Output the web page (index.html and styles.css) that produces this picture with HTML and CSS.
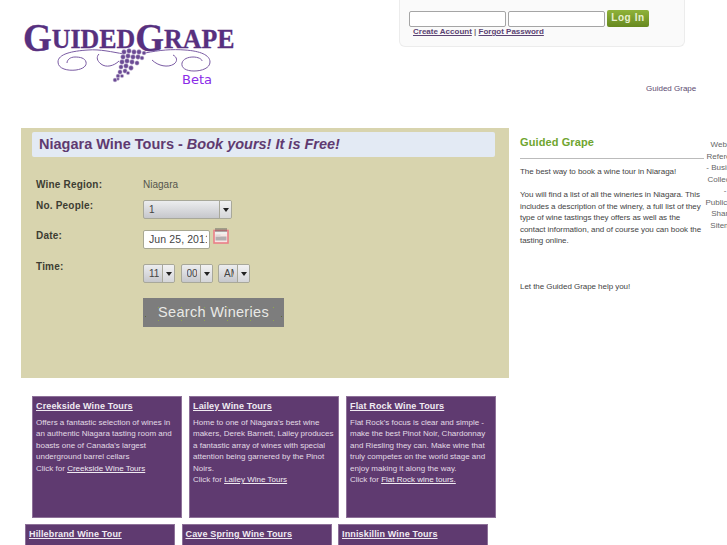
FILE: index.html
```html
<!DOCTYPE html>
<html lang="en">
<head>
  <meta charset="UTF-8">
  <title>Guided Grape</title>
  <link rel="stylesheet" href="styles.css">
</head>
<body>

  <!-- Header -->
  <div class="header">
    <svg class="logo" width="216" height="70" viewBox="22 20 216 70">
      <text class="logo-text" transform="translate(23 48) scale(.925 1)"><tspan class="logo-big" dy="3">G</tspan><tspan dy="-3">UIDED</tspan><tspan class="logo-big" dy="3">G</tspan><tspan dy="-3">RAPE</tspan></text>
      <g class="vine">
        <path d="M124 54C112 52 100 49 88 50C72 51 58 54 58 62C58 69 68 71 76 70C83 69 87 66 86 62C85 58 80 57 75 57C70 57 67 60 67 63"/>
        <path d="M119 61C114 66 106 68 101 64C97 61 96 57 99 54"/>
        <path d="M145 53C160 50 172 49 185 50C200 51 210 55 210 62C210 68 202 71 194 71C186 71 181 68 182 63C183 59 188 57 193 57C198 57 202 59 202 61"/>
        <path d="M152 60C158 66 168 68 174 64C178 61 177 57 173 55"/>
      </g>
      <g class="grapes">
        <circle cx="124" cy="52" r="2.4"/><circle cx="129" cy="51" r="2.4"/><circle cx="134" cy="52" r="2.4"/><circle cx="139" cy="52" r="2.4"/><circle cx="144" cy="53" r="2"/>
        <circle cx="123" cy="57" r="2.4"/><circle cx="128" cy="56" r="2.4"/><circle cx="133" cy="57" r="2.4"/><circle cx="138" cy="57" r="2.4"/><circle cx="142" cy="58" r="2"/>
        <circle cx="122" cy="62" r="2.4"/><circle cx="127" cy="61" r="2.4"/><circle cx="132" cy="62" r="2.4"/><circle cx="137" cy="63" r="2.2"/>
        <circle cx="121" cy="67" r="2.2"/><circle cx="126" cy="66" r="2.4"/><circle cx="131" cy="68" r="2.4"/>
        <circle cx="120" cy="72" r="2.2"/><circle cx="125" cy="71" r="2.2"/><circle cx="128" cy="73" r="1.8"/>
        <circle cx="118" cy="76" r="2"/><circle cx="122" cy="76" r="1.8"/>
        <circle cx="115" cy="80" r="2"/><circle cx="118" cy="79" r="1.4"/>
      </g>
      <text class="logo-beta" x="182" y="84">Beta</text>
    </svg>

    <div class="login-box">
      <div class="login-row">
        <input class="login-input" type="text">
        <input class="login-input" type="password">
        <span class="login-btn">Log In</span>
      </div>
      <div class="login-links">
        <a href="#">Create Account</a> | <a href="#">Forgot Password</a>
      </div>
    </div>

    <div class="site-name">Guided Grape</div>
  </div>

  <!-- Main area -->
  <div class="content">
    <div class="left-col">
      <div class="search-panel">
        <h1 class="search-title">Niagara Wine Tours - <em>Book yours! It is Free!</em></h1>

        <div class="form-row row-region">
          <span class="form-label">Wine Region:</span>
          <span class="form-value">Niagara</span>
        </div>
        <div class="form-row row-people">
          <span class="form-label">No. People:</span>
          <span class="select select-wide"><span class="select-value">1</span><span class="select-arrow"></span></span>
        </div>
        <div class="form-row row-date">
          <span class="form-label">Date:</span>
          <span class="date-input">Jun 25, 201<span class="date-cut">1</span></span>
          <svg class="cal-icon" width="16" height="16" viewBox="0 0 16 16">
            <rect x="1" y="2.5" width="14" height="12.5" fill="#f6e6e4" stroke="#ea7f88" stroke-width="1.6"/>
            <rect x="2" y="3.5" width="12" height="2.5" fill="#eef0ee"/>
            <path d="M3 0V4M5 0V4M7 0V4M9 0V4M11 0V4M13 0V4" stroke="#5c5c5c" stroke-width=".9"/>
            <rect x="2.5" y="8.5" width="11" height="4" fill="#b4aeb0"/>
            <rect x="2.5" y="6.5" width="5" height="2" fill="#e2d8d8"/>
          </svg>
        </div>
        <div class="form-row row-time">
          <span class="form-label">Time:</span>
          <span class="select select-small"><span class="select-value">11</span><span class="select-arrow"></span></span>
          <span class="select select-small"><span class="select-value">00</span><span class="select-arrow"></span></span>
          <span class="select select-small"><span class="select-value">AM</span><span class="select-arrow"></span></span>
        </div>
        <div class="search-btn">Search Wineries</div>
      </div>

      <!-- Winery cards -->
      <div class="card-row">
        <div class="card">
          <a class="card-title" href="#">Creekside Wine Tours</a>
          <p>Offers a fantastic selection of wines in an authentic Niagara tasting room and boasts one of Canada's largest underground barrel cellars<br>Click for <a href="#">Creekside Wine Tours </a></p>
        </div>
        <div class="card">
          <a class="card-title" href="#">Lailey Wine Tours</a>
          <p>Home to one of Niagara's best wine makers, Derek Barnett, Lailey produces a fantastic array of wines with special attention being garnered by the Pinot Noirs.<br>Click for <a href="#">Lailey Wine Tours</a></p>
        </div>
        <div class="card">
          <a class="card-title" href="#">Flat Rock Wine Tours</a>
          <p>Flat Rock's focus is clear and simple - make the best Pinot Noir, Chardonnay and Riesling they can. Make wine that truly competes on the world stage and enjoy making it along the way.<br>Click for <a href="#">Flat Rock wine tours.</a></p>
        </div>
      </div>
      <div class="card-row card-row-2">
        <div class="card">
          <a class="card-title" href="#">Hillebrand Wine Tour</a>
        </div>
        <div class="card">
          <a class="card-title" href="#">Cave Spring Wine Tours</a>
        </div>
        <div class="card">
          <a class="card-title" href="#">Inniskillin Wine Tours</a>
        </div>
      </div>
    </div>

    <div class="sidebar">
      <h2 class="sidebar-title">Guided Grape</h2>
      <p>The best way to book a wine tour in Niaraga!</p>
      <p>You will find a list of all the wineries in Niagara. This includes a description of the winery, a full list of they type of wine tastings they offers as well as the contact information, and of course you can book the tasting online.</p>
      <p class="sidebar-last">Let the Guided Grape help you!</p>
    </div>

    <div class="links-col">Website<br>Reference<br>- Business<br>Collection<br>-<br>Publication<br>Sharing<br>Sitemap</div>
  </div>

</body>
</html>
```

FILE: styles.css
```css
html, body {
  margin: 0;
  padding: 0;
  height: 100%;
  overflow: hidden;
  background: white;
  font-family: "Liberation Sans", Arial, sans-serif;
  font-size: 8px;
  color: #444;
}

/* Header */
.header {
  display: flex;
  height: 128px;
}

.logo {
  flex: none;
  margin: 20px 0 0 22px;
}

.logo-text {
  font-family: "Liberation Serif", serif;
  font-weight: bold;
  font-size: 28px;
  fill: #57307f;
  stroke: #57307f;
  stroke-width: .3;
}

.logo-big {
  font-size: 40px;
}

.vine path {
  fill: none;
  stroke: #7a5ba3;
  stroke-width: 1;
}

.grapes circle {
  fill: #6a4a94;
  stroke: #d8cfe2;
  stroke-width: .5;
}

.logo-beta {
  font-family: "DejaVu Sans", sans-serif;
  font-size: 13px;
  fill: #8a2be8;
}

.login-box {
  flex: none;
  box-sizing: border-box;
  width: 286px;
  height: 47px;
  margin-left: 161px;
  padding: 10px 0 0 9px;
  background: #fafafa;
  border: 1px solid #ececec;
  border-top: 0;
  border-radius: 0 0 6px 6px;
}

.login-row {
  display: flex;
  gap: 2px;
  align-items: flex-start;
}

.login-input {
  box-sizing: border-box;
  width: 97px;
  height: 16px;
  margin: 1px 0 0;
  padding: 0;
  background: white;
  border: 1px solid #a5a5a5;
  border-radius: 2px;
}

.login-btn {
  box-sizing: border-box;
  width: 42px;
  height: 17px;
  line-height: 16px;
  text-align: center;
  font-size: 10px;
  font-weight: bold;
  letter-spacing: .6px;
  color: #e8f0d0;
  background: linear-gradient(#8fb33a, #66881f);
  border-radius: 2px;
}

.login-links {
  margin: 0 0 0 4px;
  font-weight: bold;
  color: #777;
}

.login-links a {
  color: #5b4373;
}

.site-name {
  flex: none;
  margin: 83px 0 0 -39px;
  width: 52px;
  height: 12px;
  line-height: 12px;
  white-space: nowrap;
  color: #5d4a70;
}

/* Main area */
.content {
  display: flex;
  align-items: flex-start;
}

.left-col {
  flex: none;
  width: 499px;
  margin-left: 21px;
}

.search-panel {
  box-sizing: border-box;
  height: 250px;
  width: 488px;
  padding: 4px 0 0 11px;
  background: #d8d4ae;
}

.search-title {
  box-sizing: border-box;
  width: 463px;
  height: 25px;
  margin: 0 0 21px;
  padding-left: 7px;
  line-height: 24px;
  font-size: 14.5px;
  font-weight: bold;
  color: #5f3a70;
  background: #e3eaf4;
  border-radius: 2px;
}

.form-row {
  display: flex;
  align-items: flex-start;
}

.form-label {
  flex: none;
  width: 107px;
  margin-left: 4px;
  line-height: 14px;
  font-size: 10px;
  font-weight: bold;
  letter-spacing: .2px;
  color: #3d3d33;
}

.form-value {
  font-size: 10px;
  color: #55554d;
}

.row-region {
  height: 20px;
  line-height: 14px;
}

.row-people {
  height: 31px;
}

.row-people .form-label {
  margin-top: 1px;
}

.row-people .select {
  margin-top: 2px;
}

.row-date {
  height: 31px;
}

.row-time {
  height: 38px;
}

.row-time .select {
  margin-top: 4px;
}

.select {
  box-sizing: border-box;
  display: flex;
  height: 19px;
  line-height: 17px;
  font-size: 10px;
  color: #444;
  background: linear-gradient(#ecedef, #c6c7cc);
  border: 1px solid #a8a89a;
  border-radius: 2px;
  overflow: hidden;
}

.select-value {
  flex: 1;
  margin: 0 3px 0 5px;
  overflow: hidden;
  white-space: nowrap;
}

.select-arrow {
  position: relative;
  flex: none;
  width: 11px;
  border-left: 1px solid #a8a89a;
  background: linear-gradient(#f2f2f3, #d5d6d9);
}

.select-arrow::after {
  content: "";
  position: absolute;
  top: 7px;
  left: 3px;
  border: 3px solid transparent;
  border-top: 4px solid #222;
  border-bottom: 0;
}

.select-wide {
  width: 89px;
}

.select-small {
  width: 32px;
  margin-right: 5.5px;
}

.date-input {
  box-sizing: border-box;
  width: 67px;
  height: 19px;
  margin-top: 1px;
  padding-left: 5px;
  line-height: 17px;
  font-size: 10.5px;
  letter-spacing: .1px;
  white-space: nowrap;
  overflow: hidden;
  color: #444;
  background: white;
  border: 1px solid #a8a893;
  border-radius: 2px;
}

.date-cut {
  display: inline-block;
  width: 2px;
  overflow: hidden;
  vertical-align: bottom;
}

.cal-icon {
  margin: -1px 0 0 3px;
}

.search-btn {
  width: 141px;
  height: 29px;
  margin: 0 0 0 111px;
  line-height: 28px;
  text-align: center;
  font-size: 14.5px;
  letter-spacing: .3px;
  color: #e9e9e6;
  background-color: #7d7d7d;
  background-image:
    radial-gradient(circle, #8fa84a .6px, transparent 1px),
    radial-gradient(circle, #5e6a3c .5px, transparent 1px);
  background-size: 23px 13px, 17px 19px;
  background-position: 4px 3px, 11px 9px;
}

/* Cards */
.card-row {
  display: flex;
  gap: 7px;
  margin: 18px 0 0 11px;
}

.card-row-2 {
  gap: 6.5px;
  margin: 6px 0 0 4px;
}

.card {
  box-sizing: border-box;
  flex: none;
  width: 150px;
  height: 122px;
  padding: 3px 3px 0 3px;
  color: #e2dbe5;
  background: #5f3a70;
  border: 1px solid #8e7199;
}

.card-title {
  display: block;
  font-size: 9px;
  font-weight: bold;
  line-height: 12px;
  letter-spacing: .15px;
  color: #f4f0f5;
}

.card p {
  margin: 5px 0 0;
  line-height: 11.4px;
}

.card a {
  color: #f0ebf2;
}

/* Sidebar */
.sidebar {
  flex: none;
  box-sizing: border-box;
  width: 184px;
  line-height: 11.5px;
  letter-spacing: -.05px;
}

.sidebar-title {
  margin: 0;
  height: 30px;
  line-height: 29px;
  font-size: 11px;
  letter-spacing: .1px;
  color: #6fa52f;
  border-bottom: 1px solid #bbb;
}

.sidebar p {
  margin: 7px 0 11.5px;
}

.sidebar .sidebar-last {
  margin-top: 34.5px;
}

.links-col {
  flex: none;
  width: 42px;
  margin: 11px 0 0 0;
  line-height: 11.5px;
  text-align: center;
  color: #666;
}
```
